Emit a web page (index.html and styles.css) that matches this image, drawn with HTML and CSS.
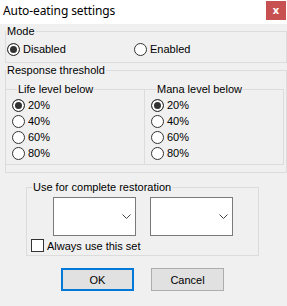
FILE: index.html
```html
<!DOCTYPE html>
<html lang="en">
  <head>
    <meta charset="UTF-8" />
    <meta name="viewport" content="width=device-width, initial-scale=1.0" />
    <title>Auto-eating settings</title>
    <link rel="stylesheet" href="styles.css">
  </head>
  <body>
    <div class="titlebar">
      <span class="title">Auto-eating settings</span>
      <span class="close">x</span>
    </div>

    <form class="dialog">
      <fieldset class="group mode">
        <legend>Mode</legend>
        <div class="mode-row">
          <label class="opt"><input type="radio" name="mode" checked />Disabled</label>
          <label class="opt"><input type="radio" name="mode" />Enabled</label>
        </div>
      </fieldset>

      <fieldset class="group threshold">
        <legend>Response threshold</legend>
        <div class="levels">
          <fieldset class="group level">
            <legend>Life level below</legend>
            <label class="opt"><input type="radio" name="life" checked />20%</label>
            <label class="opt"><input type="radio" name="life" />40%</label>
            <label class="opt"><input type="radio" name="life" />60%</label>
            <label class="opt"><input type="radio" name="life" />80%</label>
          </fieldset>
          <fieldset class="group level mana">
            <legend>Mana level below</legend>
            <label class="opt"><input type="radio" name="mana" checked />20%</label>
            <label class="opt"><input type="radio" name="mana" />40%</label>
            <label class="opt"><input type="radio" name="mana" />60%</label>
            <label class="opt"><input type="radio" name="mana" />80%</label>
          </fieldset>
        </div>
      </fieldset>

      <fieldset class="group restore">
        <legend>Use for complete restoration</legend>
        <div class="combos">
          <div class="combo">
            <svg width="9" height="5" viewBox="0 0 9 5"><polyline points="0.5,0.5 4.5,4.5 8.5,0.5" fill="none" stroke="#444" /></svg>
          </div>
          <div class="combo">
            <svg width="9" height="5" viewBox="0 0 9 5"><polyline points="0.5,0.5 4.5,4.5 8.5,0.5" fill="none" stroke="#444" /></svg>
          </div>
        </div>
        <label class="opt check"><input type="checkbox" />Always use this set</label>
      </fieldset>

      <div class="buttons">
        <button type="button" class="btn default">OK</button>
        <button type="button" class="btn">Cancel</button>
      </div>
    </form>
  </body>
</html>
```

FILE: styles.css
```css
body {
  margin: 0;
  background: #f0f0f0;
  font-family: "Liberation Sans", Arial, sans-serif;
  font-size: 11px;
  color: #000;
}
.titlebar {
  height: 24px;
  background: #fff;
  display: flex;
  align-items: flex-start;
}
.title {
  padding: 3px 0 0 3px;
  line-height: 16px;
  font-family: "Noto Sans", sans-serif;
  font-size: 12px;
  letter-spacing: -0.1px;
}
.close {
  margin: 1px 1px 0 auto;
  width: 20px;
  height: 19px;
  background: #c75050;
  color: #fff;
  font-family: "Noto Sans", sans-serif;
  font-weight: bold;
  font-size: 11px;
  line-height: 18px;
  text-align: center;
}
.group {
  border: 1px solid #dcdcdc;
  margin: 0;
  padding: 0;
  min-width: 0;
}
.group legend {
  padding: 0 1px;
  line-height: 14px;
}
.mode,
.threshold {
  margin-left: 5px;
}
.mode-row {
  display: grid;
  grid-template-columns: 127px auto;
  padding: 4px 0 6px 1px;
}
.opt {
  display: flex;
  align-items: center;
  gap: 3px;
  height: 14px;
}
.opt input {
  appearance: none;
  margin: 0;
  width: 13px;
  height: 13px;
  border: 1px solid #333;
  background: #fff;
  flex: none;
}
.opt input[type="radio"] {
  border-radius: 50%;
}
.opt input[type="radio"]:checked {
  background: #333;
  box-shadow: inset 0 0 0 2px #fff;
}
.levels {
  display: flex;
  margin-left: -1px;
  padding: 5px 2px 7px 0;
}
.level {
  flex: 1;
  display: flex;
  flex-direction: column;
  padding: 1px 0 3px 6px;
}
.level legend {
  margin-left: 5px;
}
.level .opt {
  height: 16px;
}
.mana {
  margin-left: -1px;
}
.restore {
  margin: 7px 0 0 26px;
  width: 233px;
  box-sizing: border-box;
  padding: 3px 0 3px 4px;
}
.restore legend {
  margin-left: 1px;
}
.combos {
  display: flex;
  gap: 14px;
  padding-left: 22px;
}
.combo {
  width: 83px;
  height: 39px;
  box-sizing: border-box;
  border: 1px solid #7a7a7a;
  background: #fff;
  display: flex;
  justify-content: flex-end;
  align-items: center;
  padding-right: 4px;
}
.check {
  margin-top: 3px;
  height: 13px;
}
.buttons {
  display: flex;
  gap: 17px;
  padding: 12px 0 0 61px;
}
.btn {
  width: 73px;
  height: 23px;
  margin: 0;
  padding: 0;
  border: 1px solid #adadad;
  background: #e1e1e1;
  font-family: inherit;
  font-size: 11px;
  color: #000;
}
.btn.default {
  border: 2px solid #0078d7;
}
```
